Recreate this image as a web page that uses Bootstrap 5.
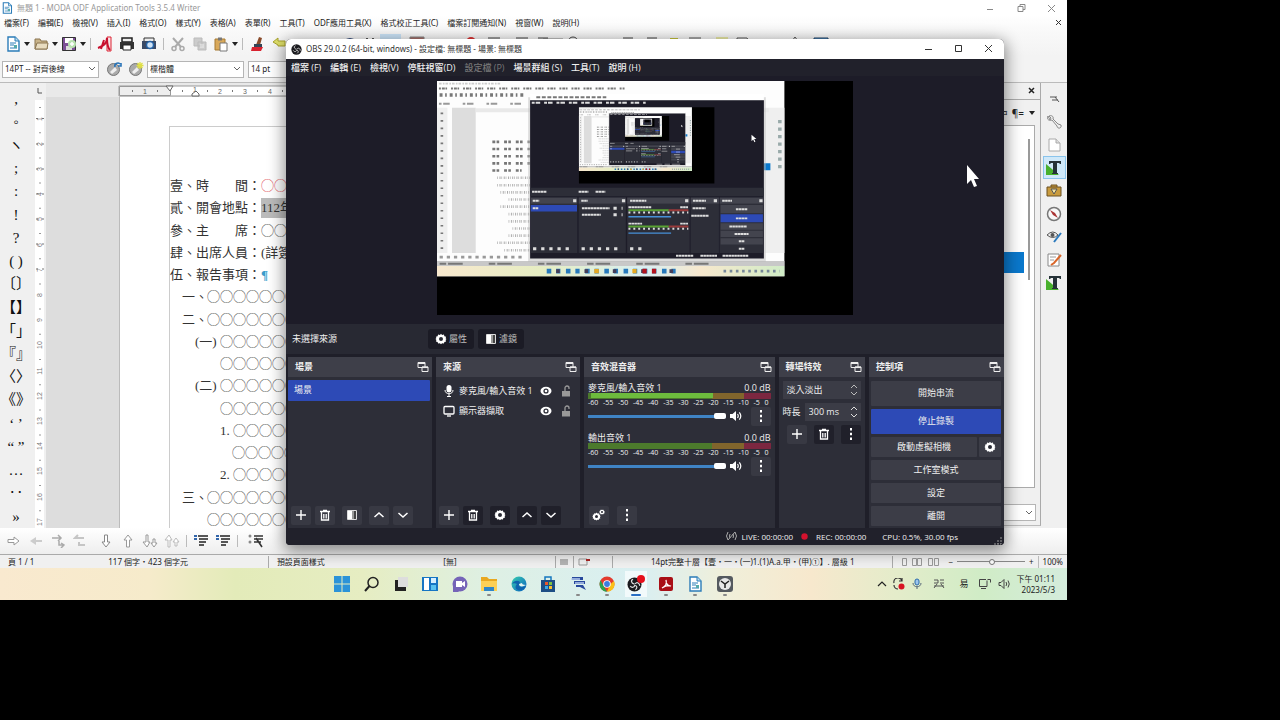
<!DOCTYPE html>
<html lang="zh-Hant">
<head>
<meta charset="utf-8">
<meta name="viewport" content="width=device-width, initial-scale=1">
<title>OBS 29.0.2</title>
<link href="https://cdn.jsdelivr.net/npm/bootstrap@5.3.0/dist/css/bootstrap.min.css" rel="stylesheet">
<style>
:root{--ui:"Open Sans","Noto Sans CJK TC",sans-serif;--win:"Noto Sans","Noto Sans CJK TC",sans-serif}
body{background:#000;font-family:var(--win);font-size:9px;line-height:12px;color:#222;overflow:hidden}
button,select,input{font:inherit;color:inherit}
button{border:0;background:none;padding:0}
svg{display:block;flex:none}
.desktop{width:83.36vw;height:83.34vh;overflow:hidden}
.i16{width:16px;height:16px}.i12{width:12px;height:12px}
/* Writer */
.writer{background:#f0f0f0;min-height:0}
.w-title{height:15px;background:#fff;color:#999;padding:0 2px 0 1px;font-size:8px}
.w-menu{height:16px;background:linear-gradient(#fff,#f9f9f9);padding:0 4px;gap:9px;font-size:8px}
.w-menu a,.o-menu a{color:inherit;text-decoration:none}
.w-tool{height:25px;background:linear-gradient(#f9f9f9,#f3f3f3);padding-left:3px}
.w-tool2{height:27px;background:#f3f3f3;border-bottom:1px solid #bbb;padding-left:2px}
.ib{width:22px;height:22px;display:flex;align-items:center;justify-content:center}
.ib.nar{width:20px}
.ar{width:8px;height:20px;display:flex;align-items:center;justify-content:center}
.ar::after{content:"";border:3px solid transparent;border-top:4px solid #222;border-bottom:0}
.vsep{width:1px;height:12px;background:#bbb;margin:0 3px}
.w-sel{appearance:none;height:17px;width:97px;border:1px solid #b5b5b5;background:#fff url("data:image/svg+xml,%3Csvg xmlns='http://www.w3.org/2000/svg' width='8' height='6'%3E%3Cpath d='M1 1l3 3 3-3' fill='none' stroke='%23666'/%3E%3C/svg%3E") no-repeat right 2px center;padding:0 12px 0 2px;border-radius:0}
.w-tool2 .w-sel{font-size:8px}
.w-main{min-height:0}
.marks{width:32px;padding:4px 0 0;overflow:hidden;font:15px/22px "Liberation Serif","Noto Sans CJK TC",serif;color:#111}
.marks button{flex:1 1 0;min-height:0;white-space:nowrap;text-align:center}
.vrule{width:14px}
.canvas{background:#ddd;min-width:0;overflow:hidden}
.hrule{height:14px;background:#e9e9e9}
.paper{background:#fff;margin-left:73px;border-left:1px solid #bbb;padding:29px 0 0 49px}
.doc{border:1px solid #ccc;border-right:0;border-bottom:0;padding:48px 0 0;margin-bottom:-3px;font:13px/20px "Liberation Serif","Noto Sans CJK TC",serif;color:#333;white-space:nowrap}
.doc p{flex:1 1 0;margin:0;display:flex;align-items:center}
.doc .n2{width:25px}.doc .n3{width:13px}
.in1{padding-left:12px}.in2{padding-left:25px}.in3{padding-left:50px}.in4{padding-left:62px}.in0{padding-left:37px}
.side{width:180px;border-right:1px solid #aaa;margin-bottom:2px;border-bottom:1px solid #bbb}
.side-head{height:17px;border-bottom:1px solid #aaa}
.side-bar{height:25px;padding-right:4px;font-size:10px}
.side-list{background:#fff;border:1px solid #aaa;margin-right:5px}
.side-list .row-sel{position:absolute;right:10px;left:0;top:35%;height:21px;background:#0a78cc}
.side-list .thumb{position:absolute;right:4px;top:13px;height:39%;width:2px;background:#999}
.side .w-sel{width:100%}
.strip{width:26px;padding-top:4px}
.strip button{height:23px;width:23px;display:flex;align-items:center;justify-content:center}
.strip button.on{background:#cfe8f9;border:1px solid #8ac4ec}
.w-nav{height:26px;background:linear-gradient(#fff,#eee);padding-left:3px;gap:0}
.w-status{height:14px;border-top:1px solid #aaa;background:#f0f0f0;white-space:nowrap;font-size:8px}
.w-status>*{flex:none}
.w-status .cell{border-right:1px solid #aaa;height:12px}
.zoomr{appearance:none;width:68px;height:8px;background:linear-gradient(#888,#888) center/100% 1px no-repeat;margin:0}
.zoomr::-webkit-slider-thumb{appearance:none;width:6px;height:6px;border-radius:50%;background:#fff;border:1px solid #777}
/* Taskbar */
.taskbar{height:32px;background:linear-gradient(90deg,#f9e9cf 0,#f6ebcb 14%,#e3ebb9 22%,#e6edc2 34%,#def0e4 46%,#d9eff2 60%,#f0efda 68%,#f7e8cd 76%,#e4ecca 84%,#d0ecc6 92%,#d4ecdc 100%)}
.taskbar>.flank{flex:1 1 0;padding:0 12px;gap:6px}
.apps{width:412px}
.apps button{flex:1 1 0;height:32px;display:flex;align-items:center;justify-content:center;position:relative}
.apps .run::after{content:"";position:absolute;bottom:4px;left:50%;margin-left:-2px;width:4px;height:2px;border-radius:1px;background:#888}
.apps .act{background:linear-gradient(#f2fafb,#f2fafb) center/22px 26px no-repeat}
.apps .act::after{width:10px;margin-left:-5px;background:#2a6fc4}
.clock{font-size:8px;line-height:11px;text-align:right}
/* OBS */
.obs{position:absolute;left:26.8%;top:6.5%;width:67.3%;height:84.3%;background:#1f1f29;color:#f0f0f0;font-family:var(--ui);border-radius:5px 5px 4px 4px;box-shadow:0 4px 16px 2px rgba(0,0,0,.45);overflow:hidden}
.o-title{height:20px;background:#fff;color:#333;padding-left:5px;font-family:var(--win);font-size:8px}
.capt{width:30px;height:18px;display:flex;align-items:center;justify-content:center}
.o-menu{height:17px;background:#21212b;padding:0 5px;gap:9px;font-weight:500}
.stage{background:#1d1c28;padding-top:5px}
.screen{width:58%;margin-left:21%;background:#000;flex:1 1 0;min-height:0;max-height:234px}
.o-ctx{height:30px;background:#282933;padding-left:6px}
.dk{background:#1b1b25;border-radius:3px;height:20px;width:46px;gap:2px;display:flex;align-items:center;justify-content:center;color:#bbb}
.docks{display:grid;grid-template-columns:145fr 145fr 192fr 87fr 136fr;column-gap:4px;height:171px;padding-left:2px;margin-top:3px}
.dock{background:#2d2e38;min-width:0;min-height:0}
.dock>header{height:20px;background:#3e3f49;padding:0 3px 0 7px;font-weight:600}
.ob{background:#383943;border-radius:2px;width:20px;height:19px;display:flex;align-items:center;justify-content:center}
.ob.dim{background:#20202a}
.foot{padding:0 0 3px 3px}
.foot .gp{margin-left:7px}
.foot.wide{padding-left:5px}
.scene-on{background:#2d4ab6;height:21px;margin:3px 2px 0 0;padding-left:6px;text-align:left;border-radius:1px}
.src{height:20px;padding:0 8px 0 7px}
.chan{padding:5px 4px 0;height:50px}
.chan .lbl{line-height:11px;font-size:9px}
.meter{height:6px;background:linear-gradient(90deg,#4c7a2c 0 68%,#81652c 68% 85.5%,#7c2740 85.5%);position:relative}
.meter.live::before{content:"";position:absolute;left:3px;top:0;height:5px;width:67%;background:#6dbb3d}
.ticks{font-size:7px;line-height:8px;margin-right:2px}
.vol{appearance:none;height:12px;width:138px;margin:0;background:linear-gradient(#3f83c4,#3f83c4) center/100% 3px no-repeat}
.vol::-webkit-slider-thumb{appearance:none;width:12px;height:6px;border-radius:2px;background:#fff}
.spin{background:#3b3c46;border:0;border-radius:2px;color:#eee;height:18px;padding:0 4px;width:100%;appearance:none;min-width:0}
.spinbox{position:relative;background:#3b3c46}
.spinbox svg{position:absolute;right:2px;top:2px;pointer-events:none}
.ctl{padding:4px 3px 0 2px;gap:3px}
.ctl button{background:#3c3d47;border-radius:1px;height:20px;width:100%}
.ctl .tall{height:25px}.ctl button.rec{background:#2d4ab6}
.ctl button.cog{width:22px;flex:none;margin-left:2px}
.o-status{height:17px;font-size:8px;line-height:11px;padding-right:2px;background:#21212b;font-weight:500}
.o-status .grip{margin-left:36px}
.cursor{position:absolute;left:90.5%;top:27.4%}
</style>
</head>
<body>
<svg width="0" height="0" class="position-absolute" aria-hidden="true"><defs>
<symbol id="doc" viewBox="0 0 16 16"><path d="M3 1h7l4 4v10H3z" fill="#fff" stroke="#2b7cb8" stroke-width="1.4"/><path d="M10 1v4h4" fill="#bde" stroke="#2b7cb8"/><path d="M5 7h6M5 9h4M5 12h7" stroke="#2b7cb8"/><path d="M9 9h3v3H9z" fill="#5aa"/></symbol>
<symbol id="folder" viewBox="0 0 16 16"><path d="M2 13V3h5l1 2h6v8z" fill="#c9b48a" stroke="#8a7550"/><path d="M2 13l2-6h11l-1 6z" fill="#e8dcc0" stroke="#8a7550"/></symbol>
<symbol id="save" viewBox="0 0 16 16"><path d="M1.500 1.500h13v13h-13z" fill="#7d4f97" stroke="#333"/><path d="M4 2h8v5H4z" fill="#fff"/><path d="M5 10h6v4H5z" fill="#ddd"/><circle cx="11" cy="8" r="4" fill="#b9e3b0"/><path d="M9 8h4M11 6v4" stroke="#fff" stroke-width="1.500"/></symbol>
<symbol id="pdf" viewBox="0 0 16 16"><path d="M10 1h4v14h-4z" fill="#f7e3e6" stroke="#d23"/><path d="M1 12C7 10 10 6 10 2c0 6 1 10 3 12M7 4l-3 9" fill="none" stroke="#c8102e" stroke-width="2"/></symbol>
<symbol id="print" viewBox="0 0 16 16"><path d="M3 2h10v4H3z" fill="#eee" stroke="#222" stroke-width="1.500"/><path d="M1 6h14v7H1z" fill="#333"/><path d="M4 9h8v5H4z" fill="#fff" stroke="#222"/></symbol>
<symbol id="pview" viewBox="0 0 16 16"><path d="M3 2h10v4H3z" fill="#eee" stroke="#333"/><path d="M1 5h14v8H1z" fill="#3a4a66"/><circle cx="9" cy="9" r="3.500" fill="#cfe3f7" stroke="#2463a8" stroke-width="1.500"/></symbol>
<symbol id="cut" viewBox="0 0 16 16"><path d="M3 2l8 9M13 2l-8 9" stroke="#aaa" stroke-width="2"/><circle cx="4" cy="12.500" r="2" fill="none" stroke="#aaa" stroke-width="1.500"/><circle cx="12" cy="12.500" r="2" fill="none" stroke="#aaa" stroke-width="1.500"/></symbol>
<symbol id="copy" viewBox="0 0 16 16"><path d="M2 2h8v8H2zM6 6h8v8H6z" fill="#ccc" stroke="#bbb"/><path d="M8 9h4M8 11h4" stroke="#eee"/></symbol>
<symbol id="paste" viewBox="0 0 16 16"><path d="M2 3h10v11H2z" fill="#d9a95b" stroke="#a77a32"/><path d="M5 1.500h4v3H5z" fill="#777"/><path d="M7 7h7v8H7z" fill="#fff" stroke="#777"/></symbol>
<symbol id="brush" viewBox="0 0 16 16"><path d="M10 1l3 1-2 7H7z" fill="#8a4b2a"/><path d="M5 8h8v3H5z" fill="#345"/><path d="M3 11h11l-2 4H2z" fill="#d8222f"/></symbol>
<symbol id="undo" viewBox="0 0 16 16"><path d="M2 6l5-4v3h7v5H7V9z" fill="#dfe06a" stroke="#a9a32d"/></symbol>
<symbol id="ringb" viewBox="0 0 16 16"><circle cx="7.500" cy="8.500" r="6" fill="#aaa" stroke="#777"/><path d="M4 11l5-5 2 3-5 4z" fill="#eee"/><path d="M9 6a3 3 0 0 1 5-3M15 2v3h-3" fill="none" stroke="#2874b8" stroke-width="1.600"/></symbol>
<symbol id="ringy" viewBox="0 0 16 16"><circle cx="7.500" cy="8.500" r="6" fill="#aaa" stroke="#777"/><path d="M4 11l5-5 2 3-5 4z" fill="#eee"/><path d="M12 1v7M8.500 4.500h7M9.500 2l5 5M14.500 2l-5 5" stroke="#dfdf45" stroke-width="1.300"/></symbol>
<symbol id="arR" viewBox="0 0 14 14"><path d="M1 5.500h6V3l5 4-5 4V8.500H1z" fill="#fff" stroke="#999"/></symbol>
<symbol id="bul" viewBox="0 0 16 16"><path d="M1 3h3M1 6h3" stroke="#36a" stroke-width="2"/><path d="M5 3h10M6 6h9M6 9h7M6 12h5" stroke="#222" stroke-width="1.700"/></symbol>
<symbol id="tsty" viewBox="0 0 16 16"><path d="M0 4v11h13z" fill="#48b02c"/><path d="M3 1h12v3h-1l-1-1h-2v10h1v1H6v-1h1V3H5L4 4H3z" fill="#263238"/></symbol>
<symbol id="gear" viewBox="0 0 12 12"><path d="M6 .8l1.100 1.300L8.900 1.600l.5 1.700 1.700.5L10.600 5.200 11.500 6l-.9 1 .5 1.500-1.700.5-.5 1.600-1.800-.4L6 11.300l-1.100-1.100-1.800.4L2.600 9 .9 8.500 1.400 7 .5 6l.9-.9L.9 3.800l1.700-.5.5-1.700 1.800.5z" fill="#fff"/><circle cx="6" cy="6" r="2" fill="#2a2b35"/></symbol>
<symbol id="filt" viewBox="0 0 12 12"><path d="M1.500 1.500h9v9h-9z" fill="#444" stroke="#ddd"/><path d="M2 2h4v8H2z" fill="#fff"/><path d="M6 2h2v8H6z" fill="#999"/></symbol>
<symbol id="pop" viewBox="0 0 12 12"><path d="M1 1.500h7v5H1z" fill="none" stroke="#eee"/><path d="M1 2h7" stroke="#eee" stroke-width="2"/><path d="M5 6h6v4.500H5z" fill="#3e3f49" stroke="#eee"/><path d="M5 6.300h6" stroke="#eee" stroke-width="1.500"/></symbol>
<symbol id="plus" viewBox="0 0 12 12"><path d="M6 1v10M1 6h10" stroke="#fff" stroke-width="1.400"/></symbol>
<symbol id="trash" viewBox="0 0 12 12"><path d="M1 2.500h10M4 1.500h4M2.500 3v8h7V3M4.800 5v4.500M7.200 5v4.500" fill="none" stroke="#fff" stroke-width="1.300"/></symbol>
<symbol id="up" viewBox="0 0 12 12"><path d="M1.500 8L6 4l4.500 4" fill="none" stroke="#fff" stroke-width="1.500"/></symbol>
<symbol id="down" viewBox="0 0 12 12"><path d="M1.500 4L6 8l4.500-4" fill="none" stroke="#fff" stroke-width="1.500"/></symbol>
<symbol id="keb" viewBox="0 0 12 12"><path d="M5 0h2v2.500H5zM5 4.800h2v2.500H5zM5 9.500h2V12H5z" fill="#fff"/></symbol>
<symbol id="mic" viewBox="0 0 12 12"><rect x="3.500" y="0" width="5" height="7.500" rx="2.500" fill="#fff"/><path d="M2 5c0 5 8 5 8 0M6 9v2.500M4 11.500h4" fill="none" stroke="#fff"/></symbol>
<symbol id="mon" viewBox="0 0 12 12"><rect x="1" y="1.500" width="10" height="7.500" rx="1" fill="none" stroke="#fff" stroke-width="1.300"/><path d="M4 11h4" stroke="#fff" stroke-width="1.300"/></symbol>
<symbol id="eye" viewBox="0 0 12 12"><ellipse cx="6" cy="6" rx="5.500" ry="4.200" fill="#fff"/><circle cx="6" cy="6" r="2.600" fill="#2d2e38"/><circle cx="6" cy="6" r="1.300" fill="#fff"/></symbol>
<symbol id="lock" viewBox="0 0 12 12"><path d="M2 6h8v5.500H2z" fill="#999"/><path d="M5 6V3a2 2 0 0 1 4 0v1" fill="none" stroke="#999" stroke-width="1.300"/></symbol>
<symbol id="spk" viewBox="0 0 12 12"><path d="M0 4h2.500L6 1v10L2.500 8H0z" fill="#fff"/><path d="M7.500 4q1.500 2 0 4M9.300 2.300q3 3.700 0 7.400" fill="none" stroke="#fff" stroke-width="1.200"/></symbol>
<symbol id="obsi" viewBox="0 0 16 16"><circle cx="8" cy="8" r="7.500" fill="#1b1b1f"/><path d="M8 7.500C4 7 4 3 6.500 2.500M8.500 8.500c-1 3.500-4 3-5 1M8.700 7.500c2-3 5-.5 4.800 2M9 9c2 1 2 3 0 4.500" fill="none" stroke="#ddd" stroke-width="1.300"/></symbol>
<!-- simplified desktop thumbnail, 1067 x 600 -->
<g id="scene"><path fill="#fdfdfd" d="M0 0h1067v600H0z"/><path fill="#efefef" d="M0 82h32v446H0zM1006 82h61v446h-61z"/><path fill="#ddd" d="M46 82h73v446H46z"/><path fill="#e9e9e9" d="M119 84h900v12H119z"/><path fill="#c8c8c8" d="M0 553h1067v15H0z"/><path fill="url(#tb)" d="M0 568h1067v32H0z"/>
<g stroke="#777" fill="none"><path d="M6 23h570" stroke-width="6" stroke-dasharray="6 3 9 2 5 12"/><path d="M6 8h190" stroke="#ccc" stroke-width="5" stroke-dasharray="8 4 5 3"/><path d="M8 43h262" stroke-width="10" stroke-dasharray="9 8 5 9"/><path d="M6 70h270" stroke="#999" stroke-width="6" stroke-dasharray="8 5 20 40"/><path d="M15 97v425" stroke-width="8" stroke-dasharray="5 18"/><path d="M170 187h116M170 209h116M170 231h116M170 253h116M170 275h90" stroke-width="8" stroke-dasharray="9 4 8 15"/><path d="M185 297h101M185 320h101M195 342h91M220 364h66M195 386h91M220 409h66M220 431h66M232 453h54M220 475h66M185 497h101M207 520h79" stroke="#aaa" stroke-width="8" stroke-dasharray="2 5 3 3"/><path d="M8 541h254" stroke="#999" stroke-width="8" stroke-dasharray="10 12"/><path d="M8 561h850" stroke-width="6" stroke-dasharray="20 6 45 80"/><path d="M1053 120v160" stroke-width="11" stroke-dasharray="10 13" stroke="#9aa"/></g>
<path fill="#0a78cc" d="M1004 253h20v21h-20z"/><path fill="#bbb" d="M280 50h730v506H280z" opacity=".5"/><path fill="#fff" d="M286 39h718v20H286z"/><path fill="#1d1c28" d="M286 59h718v486H286z"/><path fill="#2d2e38" d="M286 328h718v26H286zM288 377h143v151H288zM435 377h145v151H435zM584 377h192v151H584zM779 377h87v151h-87zM868 377h134v151H868z"/><path fill="#43444e" d="M288 358h143v19H288zM435 358h145v19H435zM584 358h192v19H584zM779 358h87v19h-87zM868 358h134v19H868zM871 381h130v25H871zM871 437h130v20H871zM871 460h130v19H871zM871 483h130v19H871z"/><path fill="#2d4ab6" d="M288 381h142v20H288zM871 409h130v25H871z"/><path stroke="#59a132" stroke-width="6" d="M588 397h124M588 447h124"/><path stroke="#9a3a3a" stroke-width="6" d="M712 397h60M712 447h60"/><path stroke="#4790d8" stroke-width="4" d="M588 417h131M588 467h131"/>
<g stroke="#ddd" stroke-width="6"><path d="M291 67h350" stroke-dasharray="9 3 14 12"/><path d="M305 50h215" stroke="#777" stroke-dasharray="12 5"/><path d="M292 340h44M435 340h30M487 340h30M294 368h20M443 368h20M593 368h50M786 368h40M876 368h30M294 391h18M445 391h85M445 411h58M588 388h70M747 388h24M588 438h42M747 438h24M785 391h40M781 414h54M918 394h36M918 422h36M898 447h53M914 470h43M927 492h18M927 515h18M734 537h54M809 537h51M877 537h79" stroke-dasharray="8 1"/><path d="M295 515h115M444 515h115M593 515h38M542 391h28M542 411h28M418 368h10M568 368h10M762 368h10M850 368h10M990 368h10" stroke-dasharray="10 15" stroke-width="9"/><path d="M588 404h184M588 454h184" stroke-dasharray="6 9" stroke-width="6"/></g>
<path d="M337 584h400" stroke="#2779bb" stroke-width="14" stroke-dasharray="14 15 13 17"/><path d="M366 584h370" stroke="#453e58" stroke-width="12" stroke-dasharray="11 76"/><path d="M483 584h14M600 584h13" stroke="#e7aa23" stroke-width="13"/><path d="M631 584h13M660 584h13" stroke="#b4141d" stroke-width="14"/><path d="M880 584h172" stroke="#789" stroke-width="9" stroke-dasharray="8 11"/>
<path fill="#000" d="M436 81h416v234H436z"/><path d="M966 165v20l5-5 4 8 3-2-4-8h7z" fill="#fff"/></g>
<linearGradient id="tb"><stop offset="0" stop-color="#f9e9cf"/><stop offset=".3" stop-color="#e6edc2"/><stop offset=".6" stop-color="#d9eff2"/><stop offset=".76" stop-color="#f7e8cd"/><stop offset="1" stop-color="#d0ecc6"/></linearGradient>
<linearGradient id="edge" x1="0" y1="0" x2="1" y2="1"><stop offset="0" stop-color="#38d0b0"/><stop offset="1" stop-color="#0a5fc0"/></linearGradient>
</defs></svg>

<div class="desktop position-relative d-flex flex-column">
<main class="writer flex-grow-1 d-flex flex-column">
  <div class="w-title d-flex align-items-center gap-1"><svg class="i12"><use href="#doc"/></svg><span>無題 1 - MODA ODF Application Tools 3.5.4 Writer</span>
    <svg class="ms-auto" width="82" height="12" fill="none" stroke="#888"><path d="M4 7.500h6M35 4.500h5v5h-5zM37 4.500v-2h5v5h-2M65 3l7 7M72 3l-7 7"/></svg></div>
  <nav class="w-menu d-flex align-items-center text-nowrap"><a href="#">檔案(F)</a><a href="#">編輯(E)</a><a href="#">檢視(V)</a><a href="#">插入(I)</a><a href="#">格式(O)</a><a href="#">樣式(Y)</a><a href="#">表格(A)</a><a href="#">表單(R)</a><a href="#">工具(T)</a><a href="#">ODF應用工具(X)</a><a href="#">格式校正工具(C)</a><a href="#">檔案訂閱通知(N)</a><a href="#">視窗(W)</a><a href="#">說明(H)</a>
    <svg class="ms-auto" width="8" height="8" stroke="#333"><path d="M1 1l5 5M6 1L1 6"/></svg></nav>
  <div class="w-tool d-flex align-items-center">
    <button class="ib nar" aria-label="New"><svg class="i16"><use href="#doc"/></svg></button><button class="ar" aria-label="More"></button><button class="ib nar" aria-label="Open"><svg class="i16"><use href="#folder"/></svg></button><button class="ar" aria-label="More"></button><button class="ib nar" aria-label="Save"><svg class="i16"><use href="#save"/></svg></button><button class="ar" aria-label="More"></button><span class="vsep"></span>
    <button class="ib" aria-label="PDF"><svg class="i16"><use href="#pdf"/></svg></button><button class="ib" aria-label="Print"><svg class="i16"><use href="#print"/></svg></button><button class="ib" aria-label="Preview"><svg class="i16"><use href="#pview"/></svg></button><span class="vsep"></span>
    <button class="ib" aria-label="Cut"><svg class="i16"><use href="#cut"/></svg></button><button class="ib" aria-label="Copy"><svg class="i16"><use href="#copy"/></svg></button><button class="ib nar" aria-label="Paste"><svg class="i16"><use href="#paste"/></svg></button><button class="ar" aria-label="More"></button><span class="vsep"></span>
    <button class="ib" aria-label="Brush"><svg class="i16"><use href="#brush"/></svg></button><button class="ib" aria-label="Undo"><svg class="i16"><use href="#undo"/></svg></button>
    <svg width="560" height="20" class="ms-5"><g fill="none" stroke="#555"><path d="M6 8q6-6 12 0" stroke="#324a7a" stroke-width="2"/><path d="M29 4v6M35 4v6" stroke-width="2"/></g><path d="M42 0h21v14H42z" fill="#cbe4f8"/><path d="M72 3h14v8H72zM205 5h20" fill="#a86e68" stroke="#888"/><circle cx="133" cy="8" r="5" fill="#d33"/><path d="M150 4h12M178 4h12M200 4h10M230 8a5 5 0 0 1 10 0M285 4h10M309 4h10" fill="none" stroke="#444"/><path d="M332 4h8v6h-8z" fill="#c4c23a"/><path d="M351 4h12M399 9V4h10l2 3M454 7l3-4 3 4" fill="none" stroke="#555"/><path d="M378 4h12" stroke="#dd5"/><path d="M476 4h14v6h-14z" fill="#5b9bd5" stroke="#246"/></svg>
  </div>
  <div class="w-tool2 d-flex align-items-center">
    <select class="w-sel" aria-label="Style"><option>14PT -- 對齊後線</option></select><button class="ib ms-1" aria-label="Update"><svg class="i16"><use href="#ringb"/></svg></button><button class="ib" aria-label="New style"><svg class="i16"><use href="#ringy"/></svg></button><select class="w-sel" aria-label="Font"><option>標楷體</option></select><select class="w-sel ms-1" aria-label="Size"><option>14 pt</option></select>
  </div>
  <div class="w-main d-flex flex-grow-1">
    <div class="marks d-flex flex-column"><button>,</button><button>◦</button><button>ヽ</button><button>;</button><button>:</button><button>!</button><button>?</button><button>( )</button><button>〔〕</button><button>【】</button><button>「」</button><button>『』</button><button>〈〉</button><button>《》</button><button>‘ ’</button><button>“ ”</button><button>…</button><button>‥</button><button>»</button></div>
    <svg class="vrule h-100"><path d="M3 17h9v800H3z" fill="#fff"/><path d="M8 24v800" stroke="#999" stroke-dasharray="1 24.200" stroke-width="2"/><path d="M4 35.500h2M4 61h2M4 86h2M4 111h2M4 136h2M4 161h2M4 186h2M10 35.500h2M10 61h2M10 86h2M10 111h2M10 136h2M10 161h2M10 186h2" stroke="#777"/><path d="M6 5v5h4" fill="none" stroke="#555"/>
      <g font-family="Liberation Sans" font-size="7" fill="#777" text-anchor="middle"><text transform="translate(10 36)rotate(-90)">1</text><text transform="translate(10 61)rotate(-90)">2</text><text transform="translate(10 86)rotate(-90)">3</text><text transform="translate(10 111)rotate(-90)">4</text><text transform="translate(10 136)rotate(-90)">5</text><text transform="translate(10 162)rotate(-90)">6</text><text transform="translate(10 187)rotate(-90)">7</text><text transform="translate(10 212)rotate(-90)">8</text><text transform="translate(10 237)rotate(-90)">9</text><text transform="translate(10 262)rotate(-90)">10</text><text transform="translate(10 288)rotate(-90)">11</text><text transform="translate(10 313)rotate(-90)">12</text><text transform="translate(10 338)rotate(-90)">13</text><text transform="translate(10 363)rotate(-90)">14</text><text transform="translate(10 388)rotate(-90)">15</text><text transform="translate(10 414)rotate(-90)">16</text><text transform="translate(10 439)rotate(-90)">17</text></g></svg>
    <div class="canvas flex-grow-1 d-flex flex-column">
      <svg class="hrule w-100"><path d="M73 3h900v10H73z" fill="#fff" stroke="#999"/><path d="M73.500 3.500h51v9h-51z" fill="#eee" stroke="#999"/><path d="M86 8h800" stroke="#777" stroke-width="2" stroke-dasharray="1 24"/><path d="M120 3h7l-3 5zM146 13h7v-2l-3-3-4 3z" fill="#fff" stroke="#666"/><g font-family="Liberation Sans" font-size="7" fill="#666"><text x="97" y="11">1</text><text x="147" y="9">1</text><text x="172" y="11">2</text><text x="197" y="11">3</text><text x="222" y="11">4</text></g></svg>
      <div class="paper flex-grow-1 d-flex flex-column"><div class="doc flex-grow-1 d-flex flex-column">
        <p><span>壹、時　　間：</span><span class="text-danger">◯◯◯</span></p>
        <p><span>貳、開會地點：</span><span style="background:#bbb">112年</span></p>
        <p><span>參、主　　席：</span>◯◯◯</p>
        <p><span>肆、出席人員：</span>(詳簽到</p>
        <p><span>伍、報告事項：</span><b style="color:#3a9ccb">¶</b></p>
        <p class="in1"><span class="n2">一、</span>◯◯◯◯◯◯◯</p>
        <p class="in1"><span class="n2">二、</span>◯◯◯◯◯◯◯</p>
        <p class="in2"><span class="n2">(一)</span>◯◯◯◯◯◯</p>
        <p class="in3">◯◯◯◯◯◯</p>
        <p class="in2"><span class="n2">(二)</span>◯◯◯◯◯◯</p>
        <p class="in3">◯◯◯◯◯◯</p>
        <p class="in3"><span class="n3">1.</span>◯◯◯◯◯</p>
        <p class="in4">◯◯◯◯◯</p>
        <p class="in3"><span class="n3">2.</span>◯◯◯◯◯</p>
        <p class="in1"><span class="n2">三、</span>◯◯◯◯◯◯◯</p>
        <p class="in0">◯◯◯◯◯◯◯</p>
      </div></div>
    </div>
    <aside class="side d-flex flex-column">
      <div class="side-head d-flex align-items-center justify-content-end pe-1"><button aria-label="Close"><svg width="8" height="8" stroke="#222" stroke-width="1.500"><path d="M1 1l5 5M6 1L1 6"/></svg></button></div>
      <div class="side-bar d-flex align-items-center justify-content-end gap-1"><span>¤</span><span>¶=</span><button class="ar" aria-label="More"></button></div>
      <div class="side-list position-relative flex-grow-1"><span class="row-sel"></span><span class="thumb"></span></div>
      <div class="pt-3 pe-1 pb-1"><select class="w-sel" aria-label="Filter"><option></option></select></div>
    </aside>
    <div class="strip d-flex flex-column align-items-center">
      <button aria-label="Settings"><svg class="i16"><path d="M4 6h7M6 9h6M9 6l4 5" stroke="#555" fill="none"/></svg></button>
      <button aria-label="Properties"><svg class="i16" fill="none" stroke="#888"><path d="M2 2c-2 4 2 5 4 4l5 6c0 3 5 3 4-1l-3-1-5-5c1-3-2-4-4-3l2 2-1 2z"/></svg></button>
      <button aria-label="Page"><svg class="i16"><path d="M3 2h7l4 4v8H3z" fill="#fff" stroke="#aaa"/><path d="M10 2v4h4" fill="#ddd" stroke="#aaa"/></svg></button>
      <button class="on" aria-label="Styles"><svg class="i16"><use href="#tsty"/></svg></button>
      <button aria-label="Gallery"><svg class="i16"><path d="M5 4V2h6v2M1 4h14v9H1z" fill="#c99b3e" stroke="#6b5122"/><path d="M5 6h6l-3 5z" fill="#f3e3a0" stroke="#555"/></svg></button>
      <button aria-label="Navigator"><svg class="i16"><circle cx="8" cy="8" r="6.500" fill="#f7f7f7" stroke="#777" stroke-width="1.500"/><path d="M4 4l5 3 3 5-5-3z" fill="#a33"/></svg></button>
      <button aria-label="Inspector"><svg class="i16" fill="none"><path d="M1 6q6-6 11 0-5 5-11 0z" stroke="#555"/><circle cx="6.500" cy="6" r="2" fill="#555"/><path d="M15 4l-7 9" stroke="#2a79bd" stroke-width="2"/></svg></button>
      <button aria-label="Changes"><svg class="i16"><path d="M2 2h11v12H2z" fill="#fff" stroke="#888"/><path d="M4 5h6M4 8h4" stroke="#999"/><path d="M15 3L8 11l-3 2" stroke="#d9662a" stroke-width="2" fill="none"/></svg></button>
      <button aria-label="Templates"><svg class="i16"><use href="#tsty"/></svg></button>
    </div>
  </div>
  <div class="w-nav d-flex align-items-center">
    <button class="ib" aria-label="1"><svg width="14" height="14"><use href="#arR"/></svg></button><button class="ib" aria-label="2"><svg width="14" height="14"><path d="M13 6H7V3L1 7l6 4V8h6z" fill="#ccc"/></svg></button><button class="ib" aria-label="3"><svg width="14" height="14" fill="none" stroke="#aaa" stroke-width="1.500"><path d="M1 4h9M7 1l3 3-3 3M8 7v4h5M10 9l3 2-3 3"/></svg></button><button class="ib" aria-label="4"><svg width="14" height="14" fill="none" stroke="#c5c5c5" stroke-width="2"><path d="M11 4H2l3-3M6 8v3h6"/></svg></button>
    <button class="ib ms-1" aria-label="5"><svg width="14" height="14"><path d="M5.500 1v7H3l4 5 4-5H8.500V1z" fill="#fff" stroke="#888"/></svg></button><button class="ib" aria-label="6"><svg width="14" height="14"><path d="M5.500 13V6H3l4-5 4 5H8.500v7z" fill="#fff" stroke="#999"/></svg></button><button class="ib" aria-label="7"><svg width="16" height="14" fill="#fff" stroke="#999"><path d="M4 1v7H1l4 5 3-5H6V1zM11 5v4H9l3 4 3-4h-2V5z"/></svg></button><button class="ib" aria-label="8"><svg width="16" height="14" fill="#fff" stroke="#bbb"><path d="M4 13V6H1l4-5 3 5H6v7zM11 12V8H9l3-4 3 4h-2v4z"/></svg></button><span class="vsep"></span>
    <button class="ib" aria-label="9"><svg class="i16"><use href="#bul"/></svg></button><button class="ib" aria-label="10"><svg class="i16"><use href="#bul"/></svg></button><span class="vsep"></span><button class="ib ms-1" aria-label="11"><svg class="i16"><path d="M6 3h9M6 6h9M6 9h7M8 5l6 9" stroke="#333" stroke-width="1.600"/><circle cx="2" cy="3" r="1.500" fill="#888"/><circle cx="2" cy="9" r="1.500" fill="#888"/></svg></button>
  </div>
  <div class="w-status d-flex align-items-center">
    <span style="width:9.400%" class="ps-2">頁 1 / 1</span><span class="cell ps-2" style="width:15.800%">117 個字・423 個字元</span><span style="width:15.600%" class="ps-2">預設頁面樣式</span><span class="cell ps-2" style="width:11.300%">[無]</span><span class="cell d-flex align-items-center justify-content-center" style="width:1.700%"><svg width="8" height="8"><path d="M0 2h8M0 4h8M0 6h8" stroke="#777"/></svg></span><span class="cell d-flex align-items-center ps-1" style="width:3.700%"><svg width="12" height="10"><path d="M1 2h8v6H1z" fill="none" stroke="#999"/><path d="M8 3h4" stroke="#a22" stroke-width="2"/></svg></span><span class="cell text-center" style="width:26.200%">14pt完整十層【壹・一・(一)1.(1)A.a.甲・(甲)①】. 層級 1</span>
    <svg width="40" height="10" class="ms-2" fill="none" stroke="#999"><path d="M1.500 1.500h4v7h-4zM11.500 1.500h4v7h-4zM16.500 1.500h4v7h-4zM27.500 1.500h4v7h-4zM33.500 1.500h4v7h-4z"/></svg>
    <span class="ms-auto d-flex align-items-center"><span>−</span><input class="zoomr mx-1" type="range" value="52" aria-label="Zoom"><span>+</span><span class="vsep mx-1"></span><span class="pe-1">100%</span></span>
  </div>
</main>
<footer class="taskbar d-flex align-items-center">
  <div class="flank"></div>
  <div class="apps d-flex">
    <button aria-label="Start"><svg class="i16"><path d="M0 0h7.500v7.500H0zM8.500 0H16v7.500H8.500zM0 8.500h7.500V16H0zM8.500 8.500H16V16H8.500z" fill="#2b93d8"/></svg></button>
    <button aria-label="Search"><svg class="i16" fill="none" stroke="#222"><circle cx="9" cy="6.500" r="5" stroke-width="1.500"/><path d="M5.500 10L1 15" stroke-width="2"/></svg></button>
    <button aria-label="Tasks"><svg class="i16"><path d="M5 1h10v10H5z" fill="#ddd"/><path d="M2 4h3v7h8v4H2z" fill="#222"/></svg></button>
    <button aria-label="Widgets"><svg class="i16"><path d="M0 1h16v14H0z" fill="#1675c4"/><path d="M2 2h5v12H2z" fill="#fff"/><path d="M9 2h5v5H9z" fill="#d6efff"/><path d="M9 9h5v5H9z" fill="#59c2f0"/></svg></button>
    <button aria-label="Chat"><svg class="i16"><circle cx="8" cy="8" r="7.500" fill="#7564b8"/><path d="M1 8v8h6z" fill="#7564b8"/><path d="M4 5h6v6H4zM10 7l3-2v6l-3-2z" fill="#fff"/></svg></button>
    <button class="run" aria-label="Files"><svg class="i16"><path d="M0 1h6l2 2h8v12H0z" fill="#e9a820"/><path d="M0 5h16v10H0z" fill="#fcd056"/><path d="M3 11h10v4H3z" fill="#2f86c8"/></svg></button>
    <button aria-label="Edge"><svg class="i16"><circle cx="8" cy="8" r="7.500" fill="url(#edge)"/><path d="M1 8c2-4 8-4 8-1 0 1-2 2-1 3 2 2 5 1 7 0-1 3-5 5-8 4-3-1-3-4-1-6-2-1-4-1-5 0z" fill="#0d62ad"/><path d="M8 8c0 3 4 3 7 1-3 0-4-1-4-2z" fill="#e5f4f1"/></svg></button>
    <button aria-label="Store"><svg class="i16"><path d="M5 4V1h6v3" fill="none" stroke="#1577bf" stroke-width="1.500"/><path d="M1 4h14v12H1z" fill="#1d4e85"/><path d="M5 6h3v3H5z" fill="#e8582d"/><path d="M9 6h3v3H9z" fill="#7cc243"/><path d="M5 10h3v3H5z" fill="#39a8e8"/><path d="M9 10h3v3H9z" fill="#fbc12c"/></svg></button>
    <button class="run" aria-label="App"><svg class="i16"><path d="M2 1h11v3H2zM4 5h11v3H4zM6 9h7l3 5-6-3H6z" fill="#27489c"/><path d="M1 3h9M5 7h9" stroke="#b9cdf0" stroke-width="1.500"/></svg></button>
    <button class="run" aria-label="Chrome"><svg class="i16"><circle cx="8" cy="8" r="7.500" fill="#e33b2e"/><path d="M1.500 4.300L8 16A8 8 0 0 1 1.500 4.300z" fill="#2da44e"/><path d="M8 15.500L11.500 8 15 5A7.500 7.500 0 0 1 8 15.500z" fill="#fbc116"/><circle cx="8" cy="8" r="3.800" fill="#fff"/><circle cx="8" cy="8" r="2.900" fill="#3c7de0"/></svg></button>
    <button class="run act" aria-label="OBS"><svg width="18" height="20"><svg y="3" width="15" height="15"><use href="#obsi"/></svg><circle cx="14" cy="5" r="4" fill="#e5101c"/></svg></button>
    <button class="run" aria-label="Acrobat"><svg class="i16"><rect x="1" y="1" width="14" height="14" rx="2" fill="#a90f16"/><path d="M4 12c4-2 5-5 4-8 0 4 2 6 5 6-3-1-6 0-9 2z" fill="none" stroke="#fff" stroke-width="1.200"/></svg></button>
    <button class="run" aria-label="Writer"><svg class="i16"><use href="#doc"/></svg></button>
    <button class="run" aria-label="Clock"><svg class="i16"><rect width="16" height="16" rx="3" fill="#555a60"/><circle cx="8" cy="8" r="6" fill="#e8e8e8"/><path d="M4 5l4 3 4-3M8 8v4" stroke="#222" stroke-width="1.500" fill="none"/></svg></button>
  </div>
  <div class="flank d-flex align-items-center justify-content-end">
    <svg width="10" height="10"><path d="M1 7l4-4 4 4" fill="none" stroke="#222" stroke-width="1.200"/></svg>
    <svg width="12" height="12"><path d="M1 5a4 4 0 0 1 8-2M9 0v3H6M1 7a4 4 0 0 0 4 4" fill="none" stroke="#333" stroke-width="1.200"/><circle cx="8.500" cy="8.500" r="3" fill="#d81422"/></svg>
    <svg width="12" height="12"><rect x="4" y="1" width="4" height="6" rx="2" fill="#9cc5ec" stroke="#2a6aaa"/><path d="M2 5c0 5 8 5 8 0M6 9v2" fill="none" stroke="#567"/></svg>
    <svg width="20" height="12" fill="none" stroke="#555"><path d="M5 2h4M11 2h4M5 5h4v-3M11 5h4M5 10l3-4M15 10l-3-4M5 8h10"/></svg>
    <span class="px-1">易</span>
    <svg width="14" height="12" fill="none" stroke="#444"><path d="M8 1.500H1.500v7H9v-6M3 10.500h5M9.500 1.500h3v3"/></svg>
    <svg width="12" height="12" fill="none" stroke="#444"><path d="M1 4.500h2l3-3v9l-3-3H1zM8 4q1.500 2 0 4M10 2.500q2.500 3.500 0 7"/></svg>
    <div class="clock">下午 01:11<br>2023/5/3</div>
  </div>
</footer>

<section class="obs d-flex flex-column">
  <div class="o-title d-flex align-items-center gap-1"><svg width="11" height="11"><use href="#obsi"/></svg><span>OBS 29.0.2 (64-bit, windows) - 設定檔: 無標題 - 場景: 無標題</span>
    <span class="ms-auto d-flex"><button class="capt" aria-label="Minimize"><svg width="8" height="8" stroke="#333"><path d="M0 4.500h7"/></svg></button><button class="capt" aria-label="Maximize"><svg width="8" height="8" fill="none" stroke="#333"><path d="M.5 .5h6v6h-6z"/></svg></button><button class="capt" aria-label="Close"><svg width="8" height="8" stroke="#333"><path d="M0 0l7 7M7 0L0 7"/></svg></button></span></div>
  <nav class="o-menu d-flex align-items-center"><a href="#">檔案 (F)</a><a href="#">編輯 (E)</a><a href="#">檢視(V)</a><a href="#">停駐視窗(D)</a><a href="#" style="color:#777">設定檔 (P)</a><a href="#">場景群組 (S)</a><a href="#">工具(T)</a><a href="#">說明 (H)</a></nav>
  <div class="stage flex-grow-1 d-flex flex-column">
    <div class="screen"><svg class="w-100 h-100" viewBox="0 0 416 234" preserveAspectRatio="xMidYMin slice"><g transform="scale(.3252)"><use href="#scene"/><g transform="translate(436 81)scale(.3252)"><use href="#scene"/><g transform="translate(436 81)scale(.3252)"><use href="#scene"/><g transform="translate(436 81)scale(.3252)"><use href="#scene"/></g></g></g></g></svg></div>
  </div>
  <div class="o-ctx d-flex align-items-center"><span style="width:136px">未選擇來源</span><button class="dk"><svg class="i12"><use href="#gear"/></svg>屬性</button><button class="dk ms-1"><svg class="i12"><use href="#filt"/></svg>濾鏡</button></div>
  <div class="docks">
    <section class="dock d-flex flex-column"><header class="d-flex align-items-center justify-content-between">場景<svg class="i12"><use href="#pop"/></svg></header><button class="scene-on">場景</button>
      <div class="foot mt-auto d-flex"><button class="ob" aria-label="Add"><svg class="i12"><use href="#plus"/></svg></button><button class="ob ms-1" aria-label="Remove"><svg class="i12"><use href="#trash"/></svg></button><button class="ob gp" aria-label="Filter"><svg class="i12"><use href="#filt"/></svg></button><button class="ob gp" aria-label="Up"><svg class="i12"><use href="#up"/></svg></button><button class="ob ms-1" aria-label="Down"><svg class="i12"><use href="#down"/></svg></button></div></section>
    <section class="dock d-flex flex-column"><header class="d-flex align-items-center justify-content-between">來源<svg class="i12"><use href="#pop"/></svg></header>
      <div class="src mt-1 d-flex align-items-center"><svg class="i12"><use href="#mic"/></svg><span class="ps-1">麥克風/輸入音效 1</span><svg class="i12 ms-auto"><use href="#eye"/></svg><svg class="i12 ms-2"><use href="#lock"/></svg></div>
      <div class="src d-flex align-items-center"><svg class="i12"><use href="#mon"/></svg><span class="ps-1">顯示器擷取</span><svg class="i12 ms-auto"><use href="#eye"/></svg><svg class="i12 ms-2"><use href="#lock"/></svg></div>
      <div class="foot mt-auto d-flex"><button class="ob" aria-label="Add"><svg class="i12"><use href="#plus"/></svg></button><button class="ob dim ms-1" aria-label="Remove"><svg class="i12"><use href="#trash"/></svg></button><button class="ob dim gp" aria-label="Settings"><svg class="i12"><use href="#gear"/></svg></button><button class="ob dim gp" aria-label="Up"><svg class="i12"><use href="#up"/></svg></button><button class="ob dim ms-1" aria-label="Down"><svg class="i12"><use href="#down"/></svg></button></div></section>
    <section class="dock d-flex flex-column"><header class="d-flex align-items-center justify-content-between">音效混音器<svg class="i12"><use href="#pop"/></svg></header>
      <div class="chan"><div class="lbl d-flex justify-content-between"><span>麥克風/輸入音效 1</span><span>0.0 dB</span></div><div class="meter live"></div><div class="ticks d-flex justify-content-between"><span>-60</span><span>-55</span><span>-50</span><span>-45</span><span>-40</span><span>-35</span><span>-30</span><span>-25</span><span>-20</span><span>-15</span><span>-10</span><span>-5</span><span>0</span></div><div class="d-flex align-items-center"><input class="vol" type="range" value="100" aria-label="Volume"><svg class="i12 ms-1"><use href="#spk"/></svg><button class="ob ms-auto" aria-label="More"><svg class="i12"><use href="#keb"/></svg></button></div></div>
      <div class="chan"><div class="lbl d-flex justify-content-between"><span>輸出音效 1</span><span>0.0 dB</span></div><div class="meter"></div><div class="ticks d-flex justify-content-between"><span>-60</span><span>-55</span><span>-50</span><span>-45</span><span>-40</span><span>-35</span><span>-30</span><span>-25</span><span>-20</span><span>-15</span><span>-10</span><span>-5</span><span>0</span></div><div class="d-flex align-items-center"><input class="vol" type="range" value="100" aria-label="Volume"><svg class="i12 ms-1"><use href="#spk"/></svg><button class="ob ms-auto" aria-label="More"><svg class="i12"><use href="#keb"/></svg></button></div></div>
      <div class="foot wide mt-auto d-flex gap-2"><button class="ob" aria-label="Advanced"><svg width="14" height="12"><svg y="3" width="9" height="9"><use href="#gear"/></svg><svg x="7" width="6" height="6"><use href="#gear"/></svg></svg></button><button class="ob" aria-label="More"><svg class="i12"><use href="#keb"/></svg></button></div></section>
    <section class="dock d-flex flex-column"><header class="d-flex align-items-center justify-content-between">轉場特效<svg class="i12"><use href="#pop"/></svg></header>
      <div class="spinbox mx-1 mt-1"><select class="spin" aria-label="Transition"><option>淡入淡出</option></select><svg width="10" height="14" fill="none" stroke="#bbb"><path d="M2 5l3-3 3 3M2 9l3 3 3-3"/></svg></div>
      <div class="d-flex align-items-center mt-1 mx-1"><label for="dur" class="text-nowrap pe-1">時長</label><div class="spinbox flex-grow-1"><input id="dur" class="spin" value="300 ms"><svg width="10" height="14" fill="none" stroke="#ddd"><path d="M2 5l3-3 3 3M2 9l3 3 3-3"/></svg></div></div>
      <div class="d-flex justify-content-between ps-2 pe-1 mt-1"><button class="ob" aria-label="Add"><svg class="i12"><use href="#plus"/></svg></button><button class="ob dim" aria-label="Remove"><svg class="i12"><use href="#trash"/></svg></button><button class="ob dim" aria-label="More"><svg class="i12"><use href="#keb"/></svg></button></div></section>
    <section class="dock d-flex flex-column"><header class="d-flex align-items-center justify-content-between">控制項<svg class="i12"><use href="#pop"/></svg></header>
      <div class="ctl d-flex flex-column"><button class="tall">開始串流</button><button class="tall rec">停止錄製</button><div class="d-flex"><button>啟動虛擬相機</button><button class="cog d-flex align-items-center justify-content-center" aria-label="Settings"><svg class="i12"><use href="#gear"/></svg></button></div><button>工作室模式</button><button>設定</button><button>離開</button></div></section>
  </div>
  <div class="o-status d-flex align-items-center"><svg class="ms-auto me-1" width="13" height="10" fill="none" stroke="#aaa"><path d="M3 1q-3 4 0 8M5 3q-1 2 0 4M10 1q3 4 0 8M8 3q1 2 0 4M3 9l7-8"/></svg><span>LIVE: 00:00:00</span><svg class="mx-2" width="7" height="7"><circle cx="3.500" cy="3.500" r="3.200" fill="#d3122e"/></svg><span class="me-3">REC: 00:00:00</span><span>CPU: 0.5%, 30.00 fps</span><svg class="grip align-self-end" width="8" height="8"><path d="M7 0v7H0M4 3v4" stroke="#999" fill="none" stroke-dasharray="2 1"/></svg></div>
</section>
<svg class="cursor" width="14" height="26"><path d="M1 1v19l4-4 3 7 3-1-3-7h5z" fill="#fff"/></svg>
</div>
<script src="https://cdn.jsdelivr.net/npm/bootstrap@5.3.0/dist/js/bootstrap.bundle.min.js"></script>
</body>
</html>
